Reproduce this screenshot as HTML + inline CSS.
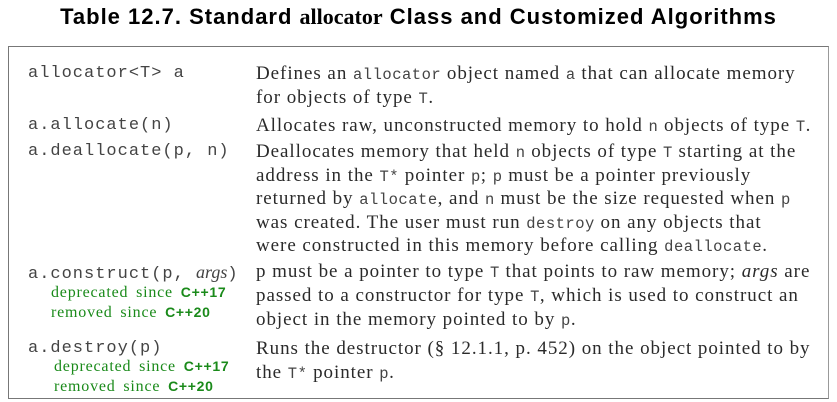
<!DOCTYPE html>
<html><head><style>
body{margin:0;width:837px;height:402px;background:#fff;position:relative;overflow:hidden;font-family:"Liberation Serif",serif;color:#2a2a2a}
.t{position:absolute;top:4px;left:0;width:837px;text-align:center;font:bold 22px "Liberation Sans",sans-serif;letter-spacing:1px;color:#000}
.t span{font-family:"Liberation Serif",serif;letter-spacing:0}
.box{position:absolute;left:8px;top:46px;width:819px;height:351px;border:1.5px solid #777;border-right-color:#999}
.l{position:absolute;left:28px;font:17px "Liberation Mono",monospace;letter-spacing:1px;color:#444;line-height:24px}
.r{position:absolute;left:256px;width:580px;font-size:19px;letter-spacing:0.95px;line-height:24px;white-space:nowrap}
code{font:15.5px "Liberation Mono",monospace;letter-spacing:0.5px;color:#444}
.g{position:absolute;color:#1a8a1a;font-size:16px;letter-spacing:0.8px;line-height:20px;word-spacing:3px}
.g b{font:bold 14px "Liberation Sans",sans-serif;letter-spacing:0.7px}
</style></head><body>
<div class="t">Table 12.7. Standard <span>allocator</span> Class and Customized Algorithms</div>
<div class="box"></div>
<div class="l" style="top:62px">allocator&lt;T&gt; a</div>
<div class="r" style="top:62px">Defines an <code>allocator</code> object named <code>a</code> that can allocate memory<br>for objects of type <code>T</code>.</div>
<div class="l" style="top:114px">a.allocate(n)</div>
<div class="r" style="top:114px">Allocates raw, unconstructed memory to hold <code>n</code> objects of type <code>T</code>.</div>
<div class="l" style="top:140px">a.deallocate(p, n)</div>
<div class="r" style="top:140px;line-height:23.5px">Deallocates memory that held <code>n</code> objects of type <code>T</code> starting at the<br>address in the <code>T*</code> pointer <code>p</code>; <code>p</code> must be a pointer previously<br>returned by <code>allocate</code>, and <code>n</code> must be the size requested when <code>p</code><br>was created. The user must run <code>destroy</code> on any objects that<br>were constructed in this memory before calling <code>deallocate</code>.</div>
<div class="l" style="top:260px">a.construct(p, <i style="font-family:'Liberation Serif',serif;font-size:18px;letter-spacing:0">args</i>)</div>
<div class="g" style="left:51px;top:283px">deprecated since <b>C++17</b><br>removed since <b>C++20</b></div>
<div class="r" style="top:260px">p must be a pointer to type <code>T</code> that points to raw memory; <i>args</i> are<br>passed to a constructor for type <code>T</code>, which is used to construct an<br>object in the memory pointed to by <code>p</code>.</div>
<div class="l" style="top:337px">a.destroy(p)</div>
<div class="g" style="left:54px;top:357px">deprecated since <b>C++17</b><br>removed since <b>C++20</b></div>
<div class="r" style="top:337px">Runs the destructor (§ 12.1.1, p. 452) on the object pointed to by<br>the <code>T*</code> pointer <code>p</code>.</div>
</body></html>
